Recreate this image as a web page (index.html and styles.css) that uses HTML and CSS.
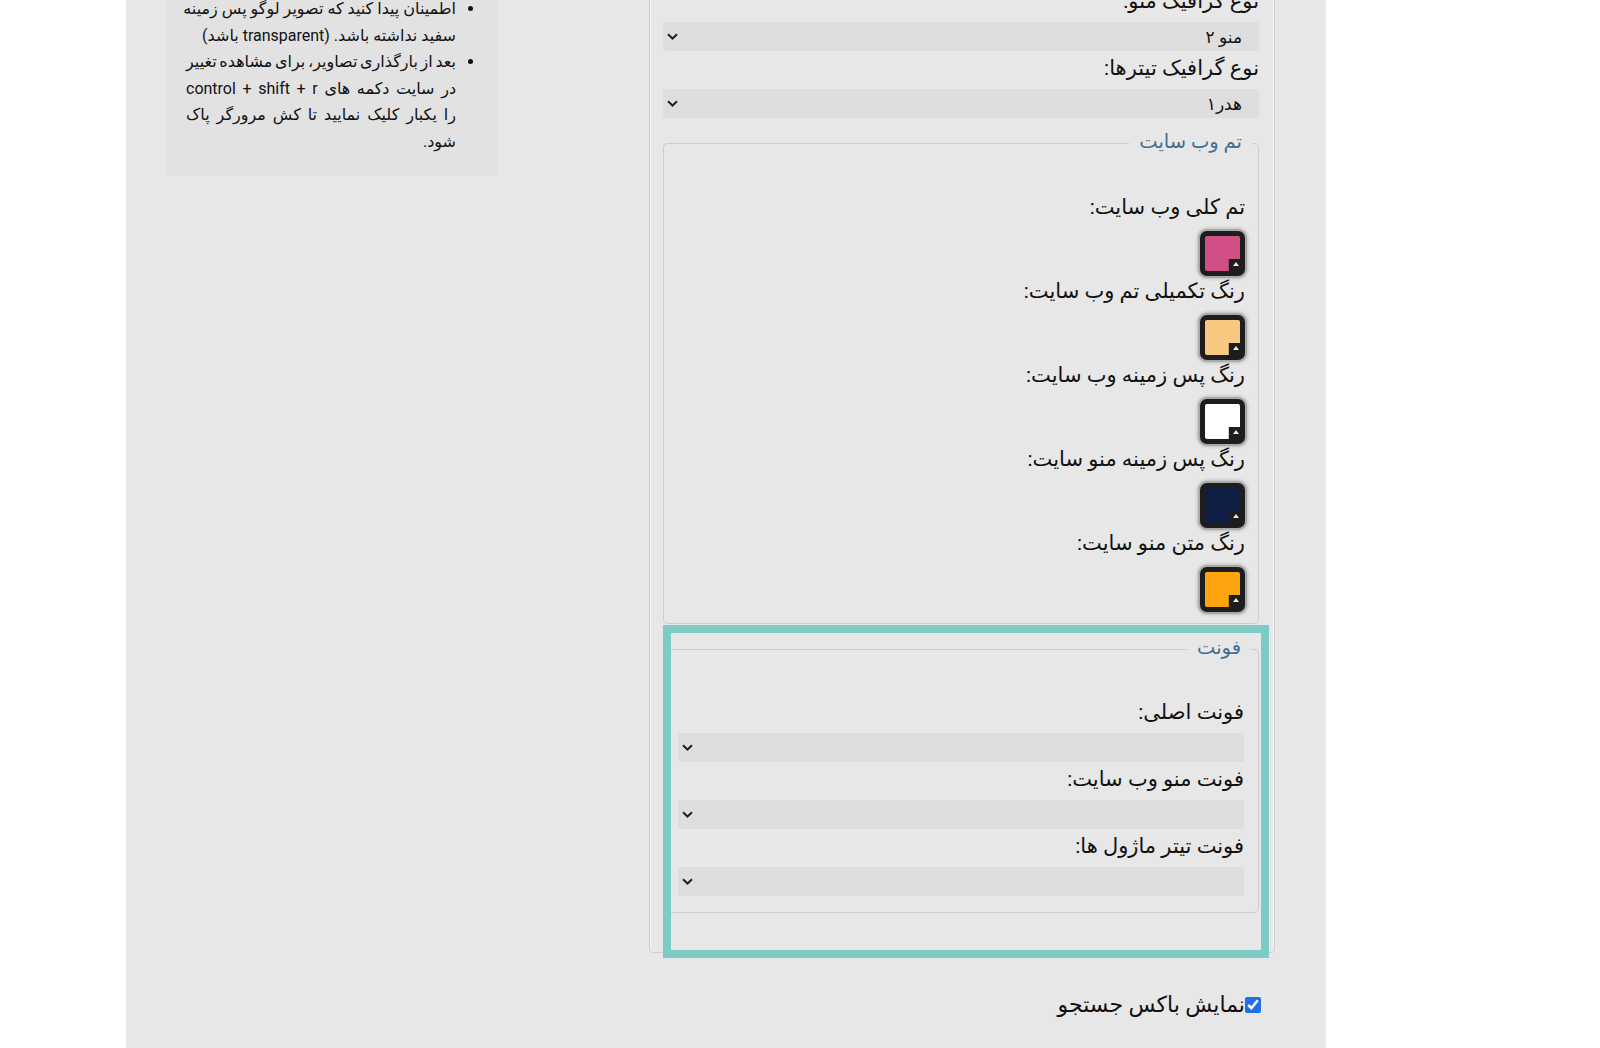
FILE: index.html
```html
<!DOCTYPE html>
<html lang="fa" dir="rtl">
<head>
<meta charset="utf-8">
<title>تنظیمات قالب</title>
<link rel="stylesheet" href="styles.css">
</head>
<body>
<div class="page">
  <div class="form-col">
    <fieldset class="outer">
      <div class="label">نوع گرافیک منو:</div>
      <div class="select">
        <span class="sel-text">منو ۲</span>
        <svg class="chev" width="11" height="7" viewBox="0 0 11 7"><path d="M1 1.2 L5.5 5.5 L10 1.2" fill="none" stroke="#222" stroke-width="2"/></svg>
      </div>
      <div class="label">نوع گرافیک تیترها:</div>
      <div class="select">
        <span class="sel-text">هدر۱</span>
        <svg class="chev" width="11" height="7" viewBox="0 0 11 7"><path d="M1 1.2 L5.5 5.5 L10 1.2" fill="none" stroke="#222" stroke-width="2"/></svg>
      </div>

      <fieldset class="group theme">
        <legend>تم وب سایت</legend>
        <div class="label sm">تم کلی وب سایت:</div>
        <div class="sw-row"><div class="swatch"><div class="fill fill-pink"></div><span class="tri"></span></div></div>
        <div class="label sm">رنگ تکمیلی تم وب سایت:</div>
        <div class="sw-row"><div class="swatch"><div class="fill fill-peach"></div><span class="tri"></span></div></div>
        <div class="label sm">رنگ پس زمینه وب سایت:</div>
        <div class="sw-row"><div class="swatch"><div class="fill fill-white"></div><span class="tri"></span></div></div>
        <div class="label sm">رنگ پس زمینه منو سایت:</div>
        <div class="sw-row"><div class="swatch"><div class="fill fill-navy"></div><span class="tri"></span></div></div>
        <div class="label sm">رنگ متن منو سایت:</div>
        <div class="sw-row"><div class="swatch"><div class="fill fill-orange"></div><span class="tri"></span></div></div>
      </fieldset>

      <fieldset class="group fonts">
        <legend>فونت</legend>
        <div class="label">فونت اصلی:</div>
        <div class="select">
          <span class="sel-text"></span>
          <svg class="chev" width="11" height="7" viewBox="0 0 11 7"><path d="M1 1.2 L5.5 5.5 L10 1.2" fill="none" stroke="#222" stroke-width="2"/></svg>
        </div>
        <div class="label">فونت منو وب سایت:</div>
        <div class="select">
          <span class="sel-text"></span>
          <svg class="chev" width="11" height="7" viewBox="0 0 11 7"><path d="M1 1.2 L5.5 5.5 L10 1.2" fill="none" stroke="#222" stroke-width="2"/></svg>
        </div>
        <div class="label">فونت تیتر ماژول ها:</div>
        <div class="select">
          <span class="sel-text"></span>
          <svg class="chev" width="11" height="7" viewBox="0 0 11 7"><path d="M1 1.2 L5.5 5.5 L10 1.2" fill="none" stroke="#222" stroke-width="2"/></svg>
        </div>
        <div class="highlight"></div>
      </fieldset>
    </fieldset>

    <label class="check-row"><input type="checkbox" checked>نمایش باکس جستجو</label>
  </div>

  <div class="help-col">
    <div class="help-box">
      <ul>
        <li><span class="ln j">اطمینان پیدا کنید که تصویر لوگو پس زمینه</span><span class="ln">سفید نداشته باشد. (transparent باشد)</span></li>
        <li><span class="ln j tight">بعد از بارگذاری تصاویر، برای مشاهده تغییر</span><span class="ln j">در سایت دکمه های control + shift + r</span><span class="ln j">را یکبار کلیک نمایید تا کش مرورگر پاک</span><span class="ln">شود.</span></li>
      </ul>
    </div>
  </div>
</div>
</body>
</html>
```

FILE: styles.css
```css
html, body {
  margin: 0;
  padding: 0;
  background: #ffffff;
}

body {
  font-family: Roboto, "DejaVu Sans", sans-serif;
  color: #111;
  overflow: hidden;
}

.page {
  margin: 0 274px 0 126px;
  width: 1200px;
  height: 1048px;
  background: #e7e7e7;
  display: flex;
  flex-direction: row;
  justify-content: space-between;
  align-items: flex-start;
  padding: 0 51px 0 40px;
  box-sizing: border-box;
  overflow: hidden;
}

/* ---------- form column ---------- */
.form-col {
  width: 626px;
  margin-top: -27px;
}

.outer {
  margin: 0;
  padding: 10px 15px 39px 13px;
  border: 1px solid #cfcfcf;
  border-radius: 4px;
  box-shadow: inset -1px 0 0 #f3f3f3, inset 1px 0 0 #f3f3f3;
  min-width: 0;
}

.label {
  height: 38px;
  line-height: 34px;
  font-size: 21px;
  white-space: nowrap;
}

.label.sm {
  height: 36px;
  line-height: 32px;
}

.select {
  height: 29px;
  background: #dedede;
  border-radius: 2px;
  display: flex;
  align-items: center;
  justify-content: space-between;
  padding: 0 17px 0 4px;
  box-sizing: border-box;
}

.sel-text {
  font-size: 17px;
}

.chev {
  display: block;
}

.group {
  margin: 13px 0 0 0;
  border: 1px solid #cdcdcd;
  border-radius: 4px;
  padding: 0 13px;
  min-width: 0;
}

.group legend {
  font-size: 19.5px;
  line-height: 22px;
  height: 24px;
  color: #3f6d96;
  padding: 0 10px;
  margin-right: -7px;
}

.theme {
  padding-top: 36px;
  padding-bottom: 12px;
}

.fonts {
  padding: 34px 14px 16px 14px;
  position: relative;
}

.sw-row {
  height: 48px;
  padding-top: 4px;
  box-sizing: border-box;
  display: flex;
}

.swatch {
  position: relative;
  width: 45px;
  height: 45px;
  box-sizing: border-box;
  background: #1d1d1d;
  border-radius: 7px;
  padding: 5px;
  box-shadow: 0 0 0 2px #a9a9a9, 0 0 3px 3px rgba(140,140,140,0.45);
}

.fill {
  width: 100%;
  height: 100%;
  border-radius: 2px;
  clip-path: polygon(0 0, 100% 0, 100% 66%, 68% 66%, 68% 100%, 0 100%);
}

.fill-pink { background: #d14f86; }
.fill-peach { background: #f7c980; }
.fill-white { background: #ffffff; }
.fill-navy { background: #0f1e45; }
.fill-orange { background: #fda40e; }

.tri {
  position: absolute;
  left: 33px;
  top: 31px;
  width: 0;
  height: 0;
  border-left: 3px solid transparent;
  border-right: 3px solid transparent;
  border-bottom: 4px solid #e8e8e8;
}

.highlight {
  position: absolute;
  top: -36px;
  left: -1px;
  right: -11px;
  bottom: -46px;
  border: 8px solid #7accc5;
  pointer-events: none;
}

.check-row {
  display: flex;
  align-items: center;
  margin-top: 38px;
  padding-right: 14px;
  font-size: 22px;
  line-height: 28px;
}

.check-row input {
  margin: 0;
  width: 16px;
  height: 16px;
  accent-color: #1f6fe6;
}

/* ---------- help column ---------- */
.help-col {
  width: 331px;
  margin-top: -14px;
}

.help-box {
  background: #e2e2e2;
  padding: 10px 16px 21px 20px;
}

.help-box ul {
  margin: 0;
  padding: 0 25px 0 0;
}

.help-box li {
  font-size: 16px;
  line-height: 26.5px;
}

.ln {
  display: block;
  white-space: nowrap;
  text-align: start;
}

.ln.j {
  text-align: justify;
  text-align-last: justify;
}

.ln.tight {
  word-spacing: -2px;
}
```
